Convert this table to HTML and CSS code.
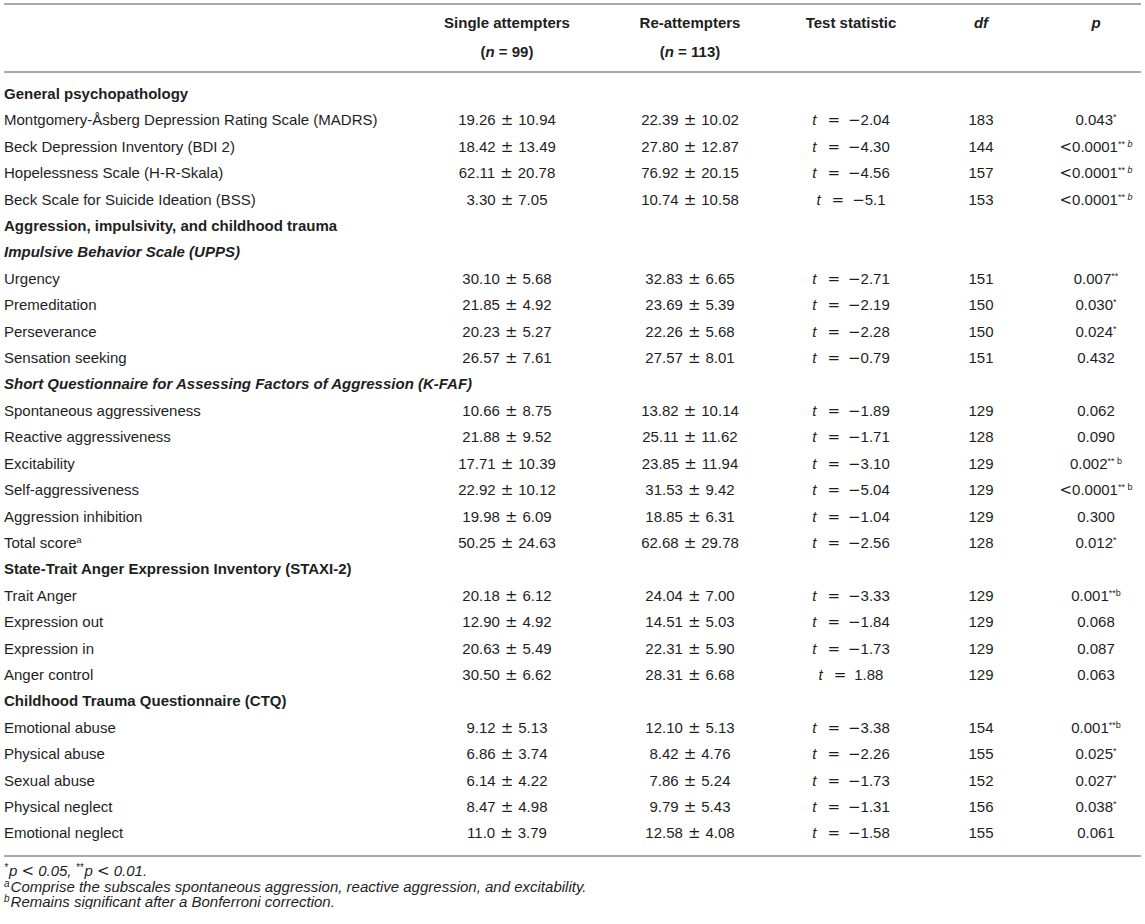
FILE: index.html
```html
<!DOCTYPE html>
<html lang="en">
<head>
  <meta charset="UTF-8">
  <title>Single attempters vs re-attempters</title>
  <link rel="stylesheet" href="styles.css">
</head>
<body>
  <div class="page">
    <table class="stats">
      <colgroup>
        <col class="c-label">
        <col class="c-single">
        <col class="c-re">
        <col class="c-test">
        <col class="c-df">
        <col class="c-p">
      </colgroup>
      <thead>
        <tr>
          <th></th>
          <th>Single attempters<br>(<i>n</i> = 99)</th>
          <th>Re-attempters<br>(<i>n</i> = 113)</th>
          <th>Test statistic</th>
          <th><i>df</i></th>
          <th class="p"><i>p</i></th>
        </tr>
      </thead>
      <tbody>
        <tr class="section"><td colspan="6">General psychopathology</td></tr>
        <tr><td>Montgomery-Åsberg Depression Rating Scale (MADRS)</td><td>19.26<span class="pm">±</span>10.94</td><td>22.39<span class="pm">±</span>10.02</td><td><i>t</i><span class="eq">=</span><span class="op">−</span>2.04</td><td>183</td><td class="p">0.043<sup>*</sup></td></tr>
        <tr><td>Beck Depression Inventory (BDI 2)</td><td>18.42<span class="pm">±</span>13.49</td><td>27.80<span class="pm">±</span>12.87</td><td><i>t</i><span class="eq">=</span><span class="op">−</span>4.30</td><td>144</td><td class="p"><span class="op">&lt;</span>0.0001<sup>** <i>b</i></sup></td></tr>
        <tr><td>Hopelessness Scale (H-R-Skala)</td><td>62.11<span class="pm">±</span>20.78</td><td>76.92<span class="pm">±</span>20.15</td><td><i>t</i><span class="eq">=</span><span class="op">−</span>4.56</td><td>157</td><td class="p"><span class="op">&lt;</span>0.0001<sup>** <i>b</i></sup></td></tr>
        <tr><td>Beck Scale for Suicide Ideation (BSS)</td><td>3.30<span class="pm">±</span>7.05</td><td>10.74<span class="pm">±</span>10.58</td><td><i>t</i><span class="eq">=</span><span class="op">−</span>5.1</td><td>153</td><td class="p"><span class="op">&lt;</span>0.0001<sup>** <i>b</i></sup></td></tr>
        <tr class="section"><td colspan="6">Aggression, impulsivity, and childhood trauma</td></tr>
        <tr class="section sub"><td colspan="6">Impulsive Behavior Scale (UPPS)</td></tr>
        <tr><td>Urgency</td><td>30.10<span class="pm">±</span>5.68</td><td>32.83<span class="pm">±</span>6.65</td><td><i>t</i><span class="eq">=</span><span class="op">−</span>2.71</td><td>151</td><td class="p">0.007<sup>**</sup></td></tr>
        <tr><td>Premeditation</td><td>21.85<span class="pm">±</span>4.92</td><td>23.69<span class="pm">±</span>5.39</td><td><i>t</i><span class="eq">=</span><span class="op">−</span>2.19</td><td>150</td><td class="p">0.030<sup>*</sup></td></tr>
        <tr><td>Perseverance</td><td>20.23<span class="pm">±</span>5.27</td><td>22.26<span class="pm">±</span>5.68</td><td><i>t</i><span class="eq">=</span><span class="op">−</span>2.28</td><td>150</td><td class="p">0.024<sup>*</sup></td></tr>
        <tr><td>Sensation seeking</td><td>26.57<span class="pm">±</span>7.61</td><td>27.57<span class="pm">±</span>8.01</td><td><i>t</i><span class="eq">=</span><span class="op">−</span>0.79</td><td>151</td><td class="p">0.432</td></tr>
        <tr class="section sub"><td colspan="6">Short Questionnaire for Assessing Factors of Aggression (K-FAF)</td></tr>
        <tr><td>Spontaneous aggressiveness</td><td>10.66<span class="pm">±</span>8.75</td><td>13.82<span class="pm">±</span>10.14</td><td><i>t</i><span class="eq">=</span><span class="op">−</span>1.89</td><td>129</td><td class="p">0.062</td></tr>
        <tr><td>Reactive aggressiveness</td><td>21.88<span class="pm">±</span>9.52</td><td>25.11<span class="pm">±</span>11.62</td><td><i>t</i><span class="eq">=</span><span class="op">−</span>1.71</td><td>128</td><td class="p">0.090</td></tr>
        <tr><td>Excitability</td><td>17.71<span class="pm">±</span>10.39</td><td>23.85<span class="pm">±</span>11.94</td><td><i>t</i><span class="eq">=</span><span class="op">−</span>3.10</td><td>129</td><td class="p">0.002<sup>** b</sup></td></tr>
        <tr><td>Self-aggressiveness</td><td>22.92<span class="pm">±</span>10.12</td><td>31.53<span class="pm">±</span>9.42</td><td><i>t</i><span class="eq">=</span><span class="op">−</span>5.04</td><td>129</td><td class="p"><span class="op">&lt;</span>0.0001<sup>** b</sup></td></tr>
        <tr><td>Aggression inhibition</td><td>19.98<span class="pm">±</span>6.09</td><td>18.85<span class="pm">±</span>6.31</td><td><i>t</i><span class="eq">=</span><span class="op">−</span>1.04</td><td>129</td><td class="p">0.300</td></tr>
        <tr><td>Total score<sup>a</sup></td><td>50.25<span class="pm">±</span>24.63</td><td>62.68<span class="pm">±</span>29.78</td><td><i>t</i><span class="eq">=</span><span class="op">−</span>2.56</td><td>128</td><td class="p">0.012<sup>*</sup></td></tr>
        <tr class="section"><td colspan="6">State-Trait Anger Expression Inventory (STAXI-2)</td></tr>
        <tr><td>Trait Anger</td><td>20.18<span class="pm">±</span>6.12</td><td>24.04<span class="pm">±</span>7.00</td><td><i>t</i><span class="eq">=</span><span class="op">−</span>3.33</td><td>129</td><td class="p">0.001<sup>**b</sup></td></tr>
        <tr><td>Expression out</td><td>12.90<span class="pm">±</span>4.92</td><td>14.51<span class="pm">±</span>5.03</td><td><i>t</i><span class="eq">=</span><span class="op">−</span>1.84</td><td>129</td><td class="p">0.068</td></tr>
        <tr><td>Expression in</td><td>20.63<span class="pm">±</span>5.49</td><td>22.31<span class="pm">±</span>5.90</td><td><i>t</i><span class="eq">=</span><span class="op">−</span>1.73</td><td>129</td><td class="p">0.087</td></tr>
        <tr><td>Anger control</td><td>30.50<span class="pm">±</span>6.62</td><td>28.31<span class="pm">±</span>6.68</td><td><i>t</i><span class="eq">=</span>1.88</td><td>129</td><td class="p">0.063</td></tr>
        <tr class="section"><td colspan="6">Childhood Trauma Questionnaire (CTQ)</td></tr>
        <tr><td>Emotional abuse</td><td>9.12<span class="pm">±</span>5.13</td><td>12.10<span class="pm">±</span>5.13</td><td><i>t</i><span class="eq">=</span><span class="op">−</span>3.38</td><td>154</td><td class="p">0.001<sup>**b</sup></td></tr>
        <tr><td>Physical abuse</td><td>6.86<span class="pm">±</span>3.74</td><td>8.42<span class="pm">±</span>4.76</td><td><i>t</i><span class="eq">=</span><span class="op">−</span>2.26</td><td>155</td><td class="p">0.025<sup>*</sup></td></tr>
        <tr><td>Sexual abuse</td><td>6.14<span class="pm">±</span>4.22</td><td>7.86<span class="pm">±</span>5.24</td><td><i>t</i><span class="eq">=</span><span class="op">−</span>1.73</td><td>152</td><td class="p">0.027<sup>*</sup></td></tr>
        <tr><td>Physical neglect</td><td>8.47<span class="pm">±</span>4.98</td><td>9.79<span class="pm">±</span>5.43</td><td><i>t</i><span class="eq">=</span><span class="op">−</span>1.31</td><td>156</td><td class="p">0.038<sup>*</sup></td></tr>
        <tr><td>Emotional neglect</td><td>11.0<span class="pm">±</span>3.79</td><td>12.58<span class="pm">±</span>4.08</td><td><i>t</i><span class="eq">=</span><span class="op">−</span>1.58</td><td>155</td><td class="p">0.061</td></tr>
      </tbody>
    </table>

    <div class="notes">
      <p><sup>*</sup>p <span class="op">&lt;</span> 0.05, <sup>**</sup>p <span class="op">&lt;</span> 0.01.</p>
      <p><sup>a</sup>Comprise the subscales spontaneous aggression, reactive aggression, and excitability.</p>
      <p><sup>b</sup>Remains significant after a Bonferroni correction.</p>
    </div>
  </div>
</body>
</html>
```

FILE: styles.css
```css
/* Reset */
* {
  margin: 0;
  padding: 0;
  box-sizing: border-box;
}

body {
  font-family: "Liberation Sans", Arial, sans-serif;
  font-size: 15px;
  color: #1e1e1e;
  background-color: #fff;
}

.page {
  padding: 3px 4px 0 4px;
}

.stats {
  width: 1137px;
  border-collapse: collapse;
  table-layout: fixed;
}

.c-label { width: 408px; }
.c-single { width: 190px; }
.c-re { width: 176px; }
.c-test { width: 146px; }
.c-df { width: 114px; }
.c-p { width: 103px; }

/* Naglowek tabeli */
.stats thead tr {
  border-top: 2px solid #a9a9a9;
  border-bottom: 2px solid #a9a9a9;
}

.stats th {
  font-weight: bold;
  text-align: center;
  vertical-align: top;
  line-height: 29px;
  padding: 3px 0 5px 0;
}

.stats td {
  text-align: center;
  line-height: 26.4px;
  padding: 0;
  white-space: nowrap;
}

.stats td:first-child {
  text-align: left;
}

.stats .p {
  padding-left: 13px;
}

.stats tbody tr:first-child td {
  padding-top: 8px;
}

.stats tbody tr:last-child td {
  padding-bottom: 8px;
}

.stats tbody {
  border-bottom: 2px solid #a9a9a9;
}

.section td {
  font-weight: bold;
}

.section.sub td {
  font-style: italic;
}

/* Znaki matematyczne - szersze niz w Liberation */
.pm,
.eq,
.op {
  font-family: "DejaVu Sans", sans-serif;
  font-style: normal;
}

.pm {
  margin: 0 5px;
}

.eq {
  margin: 0 8px 0 11px;
}

sup {
  font-size: 9px;
  line-height: 0;
  vertical-align: 5px;
}

.notes {
  padding-top: 6px;
  font-style: italic;
  font-size: 15px;
  line-height: 15px;
}

.notes sup {
  font-size: 10px;
  margin-right: 1px;
}
```
